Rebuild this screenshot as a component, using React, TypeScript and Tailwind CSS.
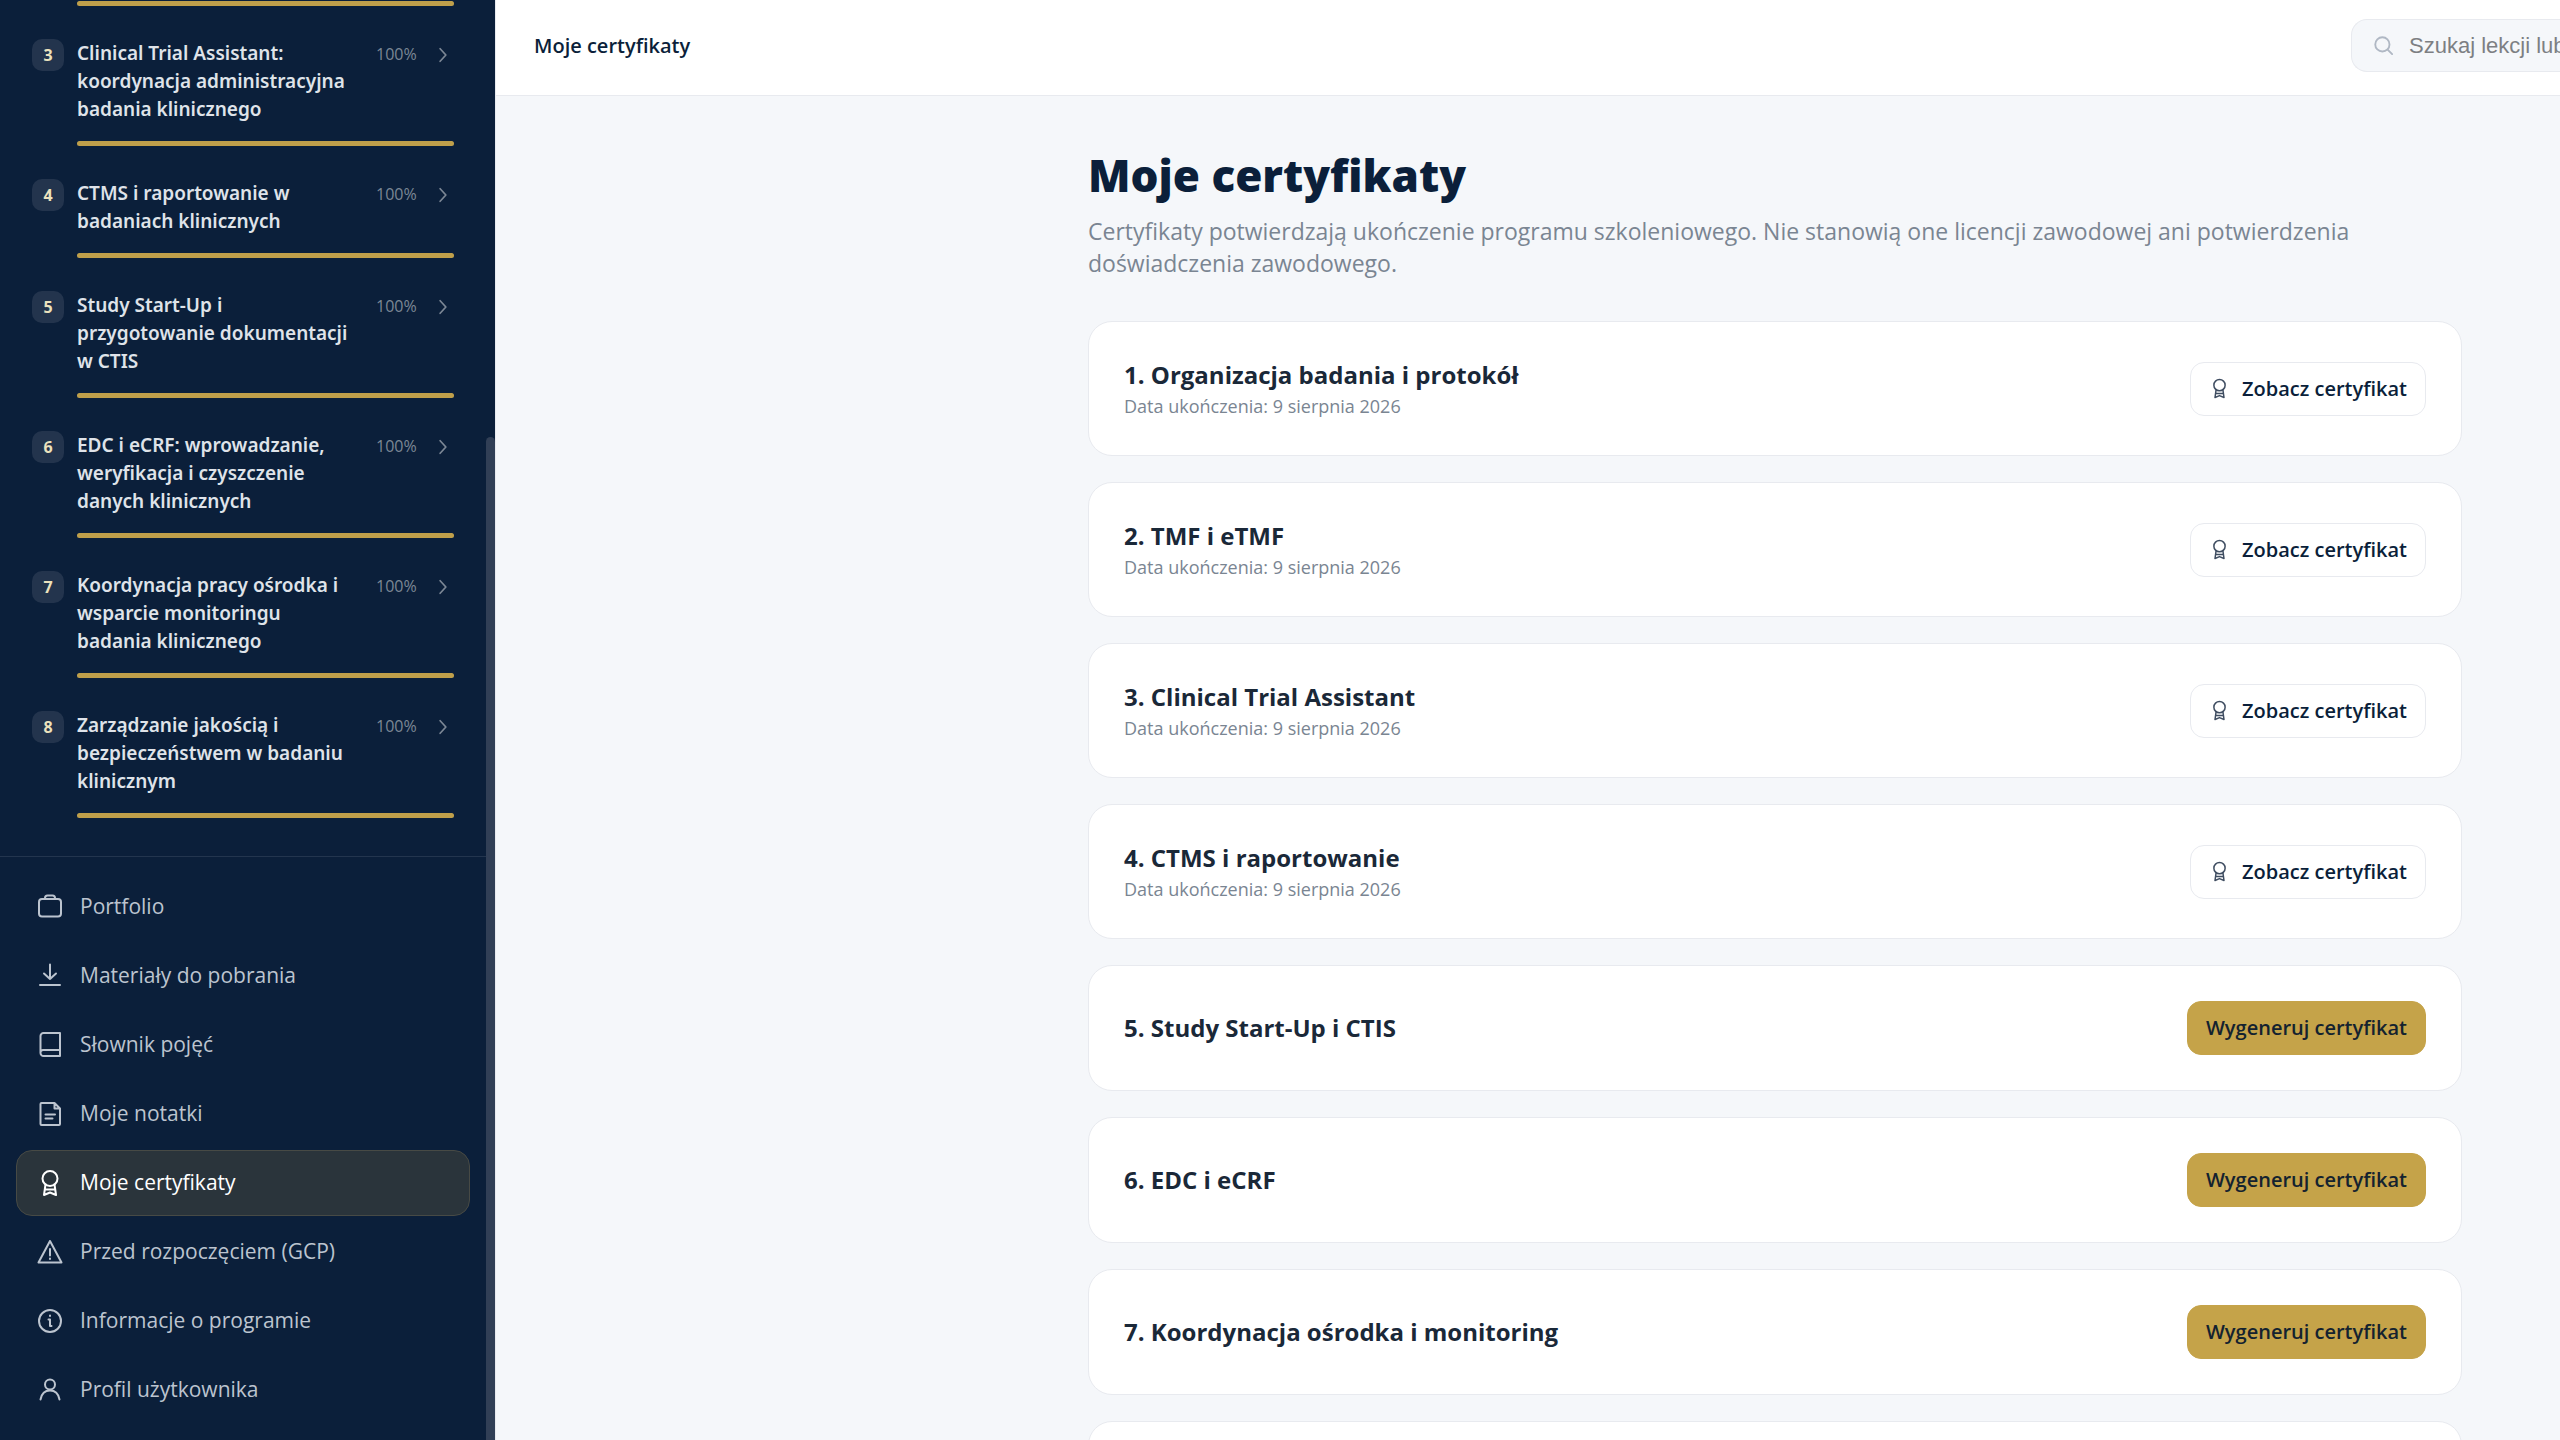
import type { ReactNode } from "react";

type IconProps = { className?: string; children: ReactNode };

const Icon = ({ className = "size-7", children }: IconProps) => (
  <svg
    viewBox="0 0 28 28"
    fill="none"
    stroke="currentColor"
    strokeWidth="2"
    strokeLinecap="round"
    strokeLinejoin="round"
    aria-hidden="true"
    className={`shrink-0 ${className}`}
  >
    {children}
  </svg>
);

const awardPaths = (
  <>
    <circle cx="14" cy="9.5" r="7.5" />
    <path d="M9.5 15.5 8 26l6-2.5 6 2.500-1.500-10.500M9 20.500h10" />
  </>
);

const modules = [
  { id: 3, title: "Clinical Trial Assistant: koordynacja administracyjna badania klinicznego", progress: 100 },
  { id: 4, title: "CTMS i raportowanie w badaniach klinicznych", progress: 100 },
  { id: 5, title: "Study Start-Up i przygotowanie dokumentacji w CTIS", progress: 100 },
  { id: 6, title: "EDC i eCRF: wprowadzanie, weryfikacja i czyszczenie danych klinicznych", progress: 100 },
  { id: 7, title: "Koordynacja pracy ośrodka i wsparcie monitoringu badania klinicznego", progress: 100 },
  { id: 8, title: "Zarządzanie jakością i bezpieczeństwem w badaniu klinicznym", progress: 100 },
];

const navItems = [
  {
    label: "Portfolio",
    icon: (
      <>
        <rect x="3" y="6" width="22" height="17.5" rx="3" />
        <path d="M9 6V5a2.5 2.5 0 0 1 2.5-2.5h5A2.5 2.5 0 0 1 19 5v1" />
      </>
    ),
  },
  { label: "Materiały do pobrania", icon: <path d="M14 2.5V17M8 11.5l6 5.500 6-5.500M4 23h20" /> },
  {
    label: "Słownik pojęć",
    icon: <path d="M24 2H7.5a3 3 0 0 0-3 3v17a3 3 0 0 0 3 3H24zM4.5 21.5A2.5 2.5 0 0 1 7 19h17" />,
  },
  {
    label: "Moje notatki",
    icon: (
      <path d="M18.5 3h-13a1 1 0 0 0-1 1v20a1 1 0 0 0 1 1H23a1 1 0 0 0 1-1V8.5zM18.5 3v5.5H24M9.5 14.5H19M9.500 18.500h7" />
    ),
  },
  { label: "Moje certyfikaty", icon: awardPaths, active: true },
  { label: "Przed rozpoczęciem (GCP)", icon: <path d="M14 3 2.5 24.500h23zM14 11v6.500M14 20.500v.5" /> },
  {
    label: "Informacje o programie",
    icon: (
      <>
        <circle cx="14" cy="14" r="11" />
        <path d="M12.5 12.500H14v6.500h1.500M14 8.500V9" />
      </>
    ),
  },
  {
    label: "Profil użytkownika",
    icon: (
      <>
        <circle cx="14" cy="8.5" r="5" />
        <path d="M4.500 23.500c1-5.500 4.500-9 9.500-9s8.500 3.500 9.500 9" />
      </>
    ),
  },
];

const certificates = [
  { title: "1. Organizacja badania i protokół", date: "9 sierpnia 2026" },
  { title: "2. TMF i eTMF", date: "9 sierpnia 2026" },
  { title: "3. Clinical Trial Assistant", date: "9 sierpnia 2026" },
  { title: "4. CTMS i raportowanie", date: "9 sierpnia 2026" },
  { title: "5. Study Start-Up i CTIS" },
  { title: "6. EDC i eCRF" },
  { title: "7. Koordynacja ośrodka i monitoring" },
  { title: "8. Zarządzanie jakością" },
];

const ProgressBar = ({ value }: { value: number }) => (
  <div className="ml-[45px] h-[5px] rounded-full bg-white/10">
    <div className="h-full rounded-full bg-[#bf9f4a]" style={{ width: `${value}%` }} />
  </div>
);

const Sidebar = () => (
  <aside className="flex w-[496px] shrink-0 border-r border-[#e8eaef] bg-[#0b1f3a]">
    <div className="min-w-0 flex-1">
      {/* the module list is scrolled, only the bar of module 2 is left at the top */}
      <div className="border-b border-white/10 px-8 pt-px pb-[38px]">
        <ProgressBar value={100} />
        {modules.map((module) => (
          <div key={module.id} className="pt-[33px]">
            <button type="button" className="mb-[18px] flex w-full items-start text-left">
              <span className="flex size-8 shrink-0 items-center justify-center rounded-[10px] bg-[#23344d] text-base font-bold text-[#ece2bd]">
                {module.id}
              </span>
              <span className="ml-[13px] w-[276px] shrink-0 font-['Noto_Sans',sans-serif] text-[19px] leading-7 font-semibold text-[#dfe3e9]">
                {module.title}
              </span>
              <span className="ml-[23px] text-base leading-[30px] text-[#7c8795]">{module.progress}%</span>
              <Icon className="mt-2 mr-[3px] ml-auto size-4 text-[#7c8795]">
                <path strokeWidth="3" d="m9 3 10 11L9 25" />
              </Icon>
            </button>
            <ProgressBar value={module.progress} />
          </div>
        ))}
      </div>

      <nav className="flex flex-col gap-[3px] px-4 pt-[17px]">
        {navItems.map((item) => (
          <a
            key={item.label}
            href="#"
            aria-current={item.active ? "page" : undefined}
            className={
              item.active
                ? "flex h-[66px] items-center gap-4 rounded-2xl border border-[#474a45] bg-[#2a343b] px-[19px] text-[21px] text-white"
                : "flex h-[66px] items-center gap-4 rounded-2xl border border-transparent px-[19px] text-[21px] text-[#bcc4cf]"
            }
          >
            <Icon>{item.icon}</Icon>
            {item.label}
          </a>
        ))}
      </nav>
    </div>
    <div className="flex w-[9px] shrink-0 flex-col pt-[437px]">
      <div className="flex-1 rounded-t-full bg-[#313f56]" />
    </div>
  </aside>
);

const Header = () => (
  <header className="flex h-24 shrink-0 items-center justify-between border-b border-[#e8eaef] bg-white pb-1 pl-[38px]">
    <p className="text-[20px] leading-7 font-semibold text-[#0b1f3a]">Moje certyfikaty</p>
    <label className="flex h-[53px] w-[209px] items-center gap-[15px] overflow-hidden rounded-l-2xl border border-r-0 border-[#e8eaef] bg-[#f5f7fa] pl-[21px]">
      <Icon className="size-[21px] text-[#b0b8c4]">
        <circle cx="12.5" cy="12.5" r="9.5" strokeWidth="2.5" />
        <path strokeWidth="2.5" d="m19.500 19.500 6 6" />
      </Icon>
      <input
        type="text"
        name="search"
        aria-label="Szukaj"
        placeholder="Szukaj lekcji lub"
        className="min-w-0 flex-1 bg-transparent font-['Liberation_Sans',sans-serif] text-[22px] outline-none placeholder:text-[#7d7f83]"
      />
    </label>
  </header>
);

const CertificateCard = ({ title, date }: { title: string; date?: string }) => (
  <li className="flex items-center justify-between rounded-3xl border border-[#e8eaef] bg-white p-[35px]">
    <div>
      <h2 className="text-2xl leading-9 font-bold text-[#1a2838]">{title}</h2>
      {date && (
        <p className="text-lg leading-[27px] text-[#7a8592]">Data ukończenia: {date}</p>
      )}
    </div>
    {date ? (
      <button
        type="button"
        className="flex h-[54px] items-center gap-3 rounded-[14px] border border-[#e8eaef] bg-white px-[18px] text-[20px] font-semibold text-[#0b1f3a]"
      >
        <Icon className="size-[21px] text-[#3f4d61]">{awardPaths}</Icon>
        Zobacz certyfikat
      </button>
    ) : (
      <button
        type="button"
        className="flex h-[54px] items-center rounded-[14px] border border-[#c5a349] bg-[#c5a349] px-[18px] text-[20px] font-semibold text-[#14222f]"
      >
        Wygeneruj certyfikat
      </button>
    )}
  </li>
);

const App = () => {
  return (
    <div className="flex h-screen overflow-hidden bg-[#f5f7fa] font-['Open_Sans',sans-serif]">
      <Sidebar />
      <div className="flex min-w-0 flex-1 flex-col">
        <Header />
        <main className="min-h-0 flex-1 overflow-hidden pt-[52px] pr-[98px] pl-[592px]">
          <h1 className="font-['Noto_Sans',sans-serif] text-[44px] leading-[54px] font-black text-[#0b1f3a]">
            Moje certyfikaty
          </h1>
          <p className="mt-[13px] text-[23px] leading-8 text-[#7a8592]">
            Certyfikaty potwierdzają ukończenie programu szkoleniowego. Nie stanowią one licencji
            zawodowej ani potwierdzenia doświadczenia zawodowego.
          </p>
          <ul className="mt-[42px] flex flex-col gap-[26px]">
            {certificates.map((certificate) => (
              <CertificateCard key={certificate.title} {...certificate} />
            ))}
          </ul>
        </main>
      </div>
    </div>
  );
};

export default App;
